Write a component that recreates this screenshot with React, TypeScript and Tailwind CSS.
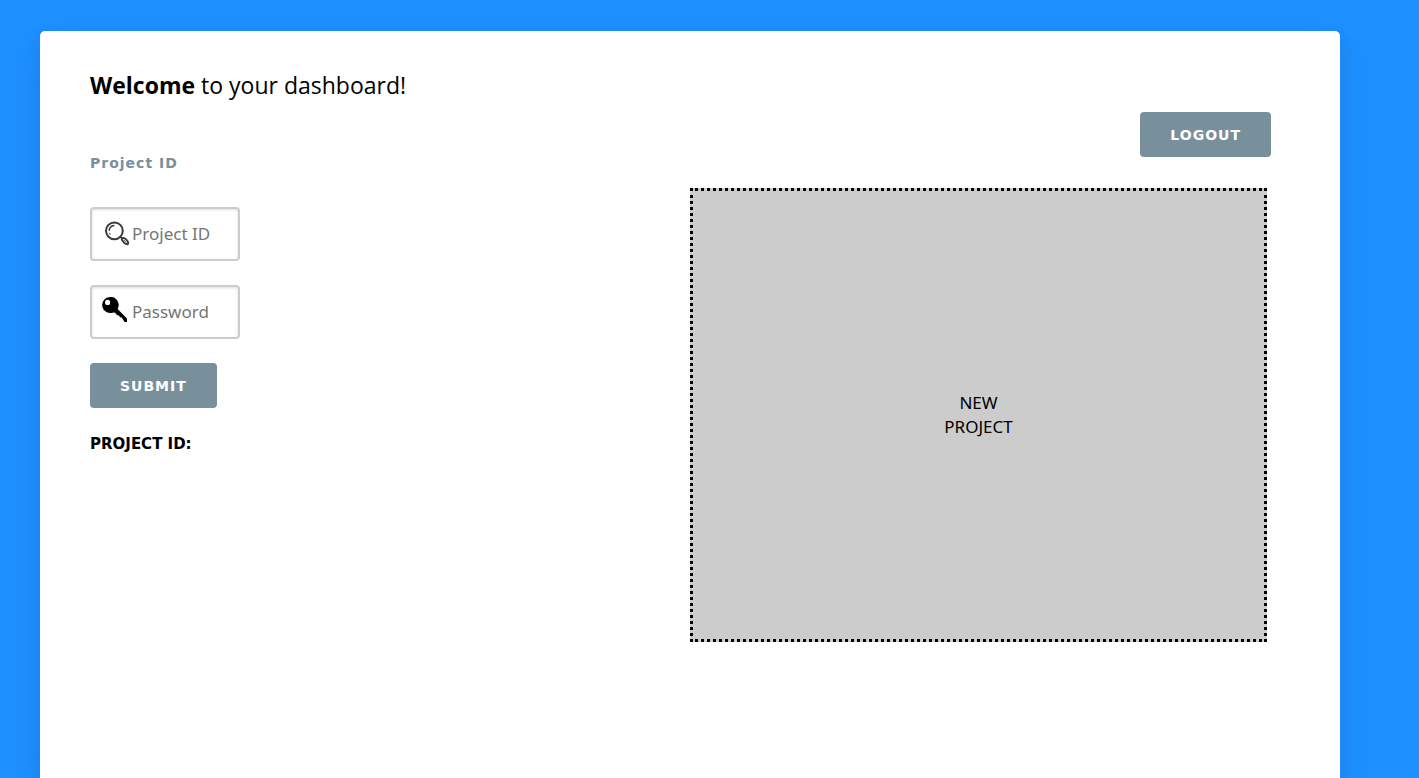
import React from "react";

function SearchIcon() {
  return (
    <svg aria-hidden="true" viewBox="0 0 25 25" className="size-[25px]" fill="none" stroke="#3a3a3a" strokeLinecap="round">
      <circle cx="9.4" cy="9.8" r="8.4" strokeWidth="2" />
      <path d="M4.2 9.2C4.6 6.8 6.4 5 8.8 4.6" strokeWidth="1.5" />
      <path d="M4.6 12.6l.5.6" strokeWidth="1.1" />
      <path d="M15.4 16l1.6 1.4" strokeWidth="1.6" />
      <path d="M17 17.4c1.6-.8 3.2.2 4.5 1.5 1.3 1.4 2 3.1 1.4 4-.9.8-2.5.1-3.9-1.3-1.4-1.4-2.8-2.8-2-4.2z" strokeWidth="2" />
      <path d="M19 19.2l2 2" strokeWidth="0.8" />
    </svg>
  );
}

function KeyIcon() {
  return (
    <svg aria-hidden="true" viewBox="0 0 25 25" className="size-[25px]">
      <path
        fillRule="evenodd"
        d="M8 0a8 8 0 1 0 3.2 15.4l2 .4 1.7 2.2 1.9.4 1.4 1.8 1.6.4 1.3 2.1L22.6 25H25v-3.6l-9.4-9.5A8 8 0 0 0 8 0zM5.6 2.8a2.6 2.6 0 1 1 0 5.2 2.6 2.6 0 0 1 0-5.2z"
      />
    </svg>
  );
}

type FieldProps = {
  id: string;
  label: string;
  type: string;
  iconClass: string;
  icon: React.ReactNode;
};

function Field({ id, label, type, iconClass, icon }: FieldProps) {
  return (
    <label htmlFor={id} className="relative block w-[150px]">
      <span className={`pointer-events-none absolute ${iconClass}`}>{icon}</span>
      <input
        id={id}
        type={type}
        aria-label={label}
        placeholder={label}
        className="h-[54px] w-full rounded-sm border-2 border-[#ccc] bg-white pb-0.5 pl-10 pr-3 text-[17px] text-black shadow-[inset_0_1px_3px_#ddd] placeholder:text-[#757575]"
      />
    </label>
  );
}

function Button({ type, children }: { type: "button" | "submit"; children: React.ReactNode }) {
  return (
    <button
      type={type}
      className="h-[45px] cursor-pointer rounded-sm bg-[#78909c] px-[30px] font-['DejaVu_Sans',sans-serif] text-sm font-bold tracking-[1px] text-white"
    >
      {children}
    </button>
  );
}

export default function App() {
  return (
    <div className="flex min-h-screen flex-col bg-[#1e90ff] pl-10 pr-[79px] pt-[31px] font-['Noto_Sans',sans-serif] text-black">
      <main className="grid grow grid-cols-2 rounded-t-[5px] bg-white px-[50px] pb-10 pt-9 shadow-[0_15px_35px_rgba(50,50,93,0.1),0_5px_15px_rgba(0,0,0,0.07)]">
        <section>
          <h1 className="font-['Open_Sans',sans-serif] text-[23px] leading-9">
            <strong className="font-bold">Welcome</strong> to your dashboard!
          </h1>
          <h2 className="mt-[50px] font-['DejaVu_Sans',sans-serif] text-sm leading-5 font-bold tracking-[1px] text-[#78909c]">Project ID</h2>
          <form className="mt-[34px] flex flex-col items-start gap-6" onSubmit={(e) => e.preventDefault()}>
            <Field id="project" label="Project ID" type="text" iconClass="left-[15px] top-[14px]" icon={<SearchIcon />} />
            <Field id="password" label="Password" type="password" iconClass="left-3 top-3" icon={<KeyIcon />} />
            <Button type="submit">SUBMIT</Button>
          </form>
          <p className="mt-[26px] font-['DejaVu_Sans',sans-serif] text-[15px] leading-5 font-bold">PROJECT ID:</p>
        </section>
        <section className="pt-[45px]">
          <div className="flex justify-end pr-[19px]">
            <Button type="button">LOGOUT</Button>
          </div>
          <button
            type="button"
            className="mt-[31px] flex h-[454px] w-[calc(100%-23px)] cursor-pointer flex-col items-center justify-center border-3 border-dotted border-black bg-[#ccc] text-[17px] leading-6"
          >
            <span>NEW</span>
            <span>PROJECT</span>
          </button>
        </section>
      </main>
    </div>
  );
}
